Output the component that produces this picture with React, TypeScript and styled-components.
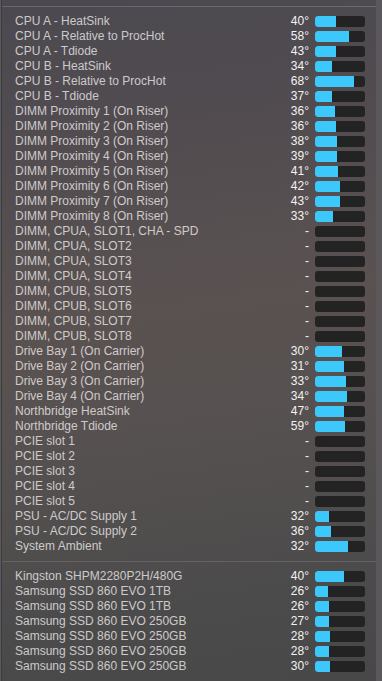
import React from 'react';
import styled, { createGlobalStyle } from 'styled-components';

type Sensor = {
  name: string;
  temp?: number;
  fill?: number; // px out of 50
};

const SENSORS: Sensor[] = [
  { name: 'CPU A - HeatSink', temp: 40, fill: 21 },
  { name: 'CPU A - Relative to ProcHot', temp: 58, fill: 34 },
  { name: 'CPU A - Tdiode', temp: 43, fill: 21 },
  { name: 'CPU B - HeatSink', temp: 34, fill: 17 },
  { name: 'CPU B - Relative to ProcHot', temp: 68, fill: 39 },
  { name: 'CPU B - Tdiode', temp: 37, fill: 17 },
  { name: 'DIMM Proximity 1 (On Riser)', temp: 36, fill: 20 },
  { name: 'DIMM Proximity 2 (On Riser)', temp: 36, fill: 21 },
  { name: 'DIMM Proximity 3 (On Riser)', temp: 38, fill: 22 },
  { name: 'DIMM Proximity 4 (On Riser)', temp: 39, fill: 22 },
  { name: 'DIMM Proximity 5 (On Riser)', temp: 41, fill: 23 },
  { name: 'DIMM Proximity 6 (On Riser)', temp: 42, fill: 25 },
  { name: 'DIMM Proximity 7 (On Riser)', temp: 43, fill: 25 },
  { name: 'DIMM Proximity 8 (On Riser)', temp: 33, fill: 18 },
  { name: 'DIMM, CPUA, SLOT1, CHA - SPD' },
  { name: 'DIMM, CPUA, SLOT2' },
  { name: 'DIMM, CPUA, SLOT3' },
  { name: 'DIMM, CPUA, SLOT4' },
  { name: 'DIMM, CPUB, SLOT5' },
  { name: 'DIMM, CPUB, SLOT6' },
  { name: 'DIMM, CPUB, SLOT7' },
  { name: 'DIMM, CPUB, SLOT8' },
  { name: 'Drive Bay 1 (On Carrier)', temp: 30, fill: 27 },
  { name: 'Drive Bay 2 (On Carrier)', temp: 31, fill: 29 },
  { name: 'Drive Bay 3 (On Carrier)', temp: 33, fill: 31 },
  { name: 'Drive Bay 4 (On Carrier)', temp: 34, fill: 32 },
  { name: 'Northbridge HeatSink', temp: 47, fill: 29 },
  { name: 'Northbridge Tdiode', temp: 59, fill: 30 },
  { name: 'PCIE slot 1' },
  { name: 'PCIE slot 2' },
  { name: 'PCIE slot 3' },
  { name: 'PCIE slot 4' },
  { name: 'PCIE slot 5' },
  { name: 'PSU - AC/DC Supply 1', temp: 32, fill: 14 },
  { name: 'PSU - AC/DC Supply 2', temp: 36, fill: 16 },
  { name: 'System Ambient', temp: 32, fill: 33 },
];

const DRIVES: Sensor[] = [
  { name: 'Kingston SHPM2280P2H/480G', temp: 40, fill: 29 },
  { name: 'Samsung SSD 860 EVO 1TB', temp: 26, fill: 13 },
  { name: 'Samsung SSD 860 EVO 1TB', temp: 26, fill: 14 },
  { name: 'Samsung SSD 860 EVO 250GB', temp: 27, fill: 14 },
  { name: 'Samsung SSD 860 EVO 250GB', temp: 28, fill: 15 },
  { name: 'Samsung SSD 860 EVO 250GB', temp: 28, fill: 14 },
  { name: 'Samsung SSD 860 EVO 250GB', temp: 30, fill: 15 },
];

const GlobalStyle = createGlobalStyle`
  html, body {
    margin: 0;
    padding: 0;
    background: #5a585b;
    overflow: hidden;
  }
  body {
    font-family: "Liberation Sans", Arial, sans-serif;
  }
`;

const Menu = styled.div`
  margin-left: 2px;
  width: 374px;
  height: 681px;
  overflow: hidden;
  background: linear-gradient(172deg, #4b4950 0%, #524c50 22%, #5a5251 45%, #555050 65%, #4c4b4b 85%, #484848 100%);
  box-shadow: -1px 0 0 #3e3c40;
`;

const TopStrip = styled.div`
  height: 6px;
  border-bottom: 1px solid #69676b;
`;

const Section = styled.div`
  padding: 7px 11px 7px 13px;
`;

const Divider = styled.div`
  height: 1px;
  background: #666263;
`;

const Row = styled.div`
  display: flex;
  align-items: center;
  height: 15px;
  font-size: 12px;
  line-height: 15px;
`;

const Label = styled.span`
  flex: 1;
  color: rgba(235, 232, 232, 0.82);
  white-space: nowrap;
`;

const Value = styled.span`
  width: 40px;
  text-align: right;
  color: #f2f2f2;
  padding-right: 6px;
`;

const Track = styled.div`
  width: 50px;
  height: 11px;
  border-radius: 3px;
  background: #232323;
  overflow: hidden;
  display: flex;
`;

const Fill = styled.div`
  height: 100%;
  background: #3cc8fb;
`;

const SensorRow: React.FC<{ s: Sensor }> = ({ s }) => (
  <Row>
    <Label>{s.name}</Label>
    <Value>{s.temp !== undefined ? `${s.temp}°` : '-'}</Value>
    <Track>{s.fill ? <Fill style={{ width: s.fill }} /> : null}</Track>
  </Row>
);

export default function App() {
  return (
    <>
      <GlobalStyle />
      <Menu>
        <TopStrip />
        <Section>
          {SENSORS.map((s, i) => (
            <SensorRow key={i} s={s} />
          ))}
        </Section>
        <Divider />
        <Section>
          {DRIVES.map((s, i) => (
            <SensorRow key={i} s={s} />
          ))}
        </Section>
      </Menu>
    </>
  );
}
